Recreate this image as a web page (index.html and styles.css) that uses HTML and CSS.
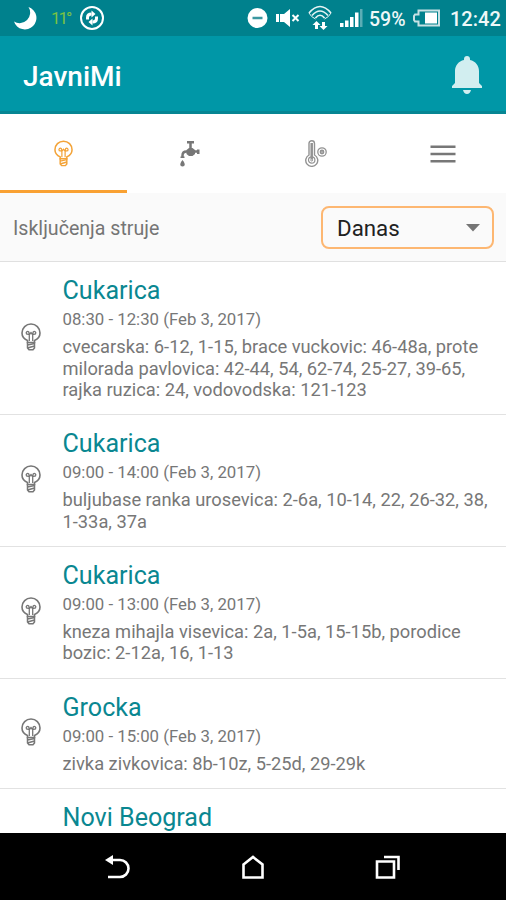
FILE: index.html
```html
<!DOCTYPE html>
<html lang="sr">
<head>
    <meta charset="UTF-8">
    <meta name="viewport" content="width=device-width, initial-scale=1.0">
    <title>JavniMi</title>
    <link rel="stylesheet" href="styles.css">
</head>
<body>
    <!-- shared bulb icon -->
    <svg class="defs" width="0" height="0">
        <symbol id="bulb" viewBox="0 0 20 28">
            <g fill="none" stroke="currentColor">
                <path d="M6.500 19.500v-2C3 16 1 13.500 1 10a9 9 0 0 1 18 0c0 3.500-2 6-5.500 7.500v2z" stroke-width="1.600"/>
                <path d="M8.300 18v-6.500L5.500 11c-1-2 1-3.500 2.300-2l.7 2.500 1.500-2 1.500 2 .7-2.500c1.300-1.500 3.300 0 2.300 2l-2.800.5V18" stroke-width="1.300"/>
                <path d="M6.500 19v6l1.500 1.800h4l1.500-1.800v-6M6.500 22l7-1.500M6.500 25l7-2" stroke-width="1.500"/>
            </g>
        </symbol>
    </svg>

    <div class="status-bar">
        <div class="status-left">
            <svg width="24" height="24" viewBox="0 0 24 24"><path d="M15.500 1A11.500 11.500 0 1 1 1 15.500 10.500 10.500 0 0 0 15.500 1z" fill="#fff"/></svg>
            <span class="temp">11°</span>
            <svg width="26" height="26" viewBox="0 0 26 26">
                <circle cx="13" cy="13" r="11" fill="none" stroke="#fff" stroke-width="2"/>
                <path d="M8.500 14.500v-2q0-3.500 4-3.500M17.500 11.500v2q0 3.500-4 3.500" fill="none" stroke="#fff" stroke-width="3"/>
                <path d="M12.500 5.500l4 3.500-4 3.500zM13.500 13.500L9.500 17l4 3.500z" fill="#fff"/>
            </svg>
        </div>
        <div class="status-right">
            <svg width="21" height="22" viewBox="0 0 21 22"><circle cx="10.500" cy="11" r="10" fill="#fff"/><path d="M5.500 11h10" stroke="#3b97a0" stroke-width="2.500"/></svg>
            <svg width="24" height="20" viewBox="0 0 24 20">
                <path d="M0 6h3v8H0zM4 6h4l6-5v18l-6-5H4z" fill="#fff"/>
                <path d="M16.500 7l6 6M22.500 7l-6 6" stroke="#fff" stroke-width="2"/>
            </svg>
            <svg width="24" height="26" viewBox="0 0 24 26">
                <g fill="none" stroke="#e6f3f4" stroke-width="1.700">
                    <path d="M1 8q11-13 22 0M4 10.500q8-9 16 0M7.500 13q4.500-5.500 9 0"/>
                    <path d="M1 8q2 4 6.500 6M23 8q-2 4-6.500 6" stroke-width="1"/>
                </g>
                <path d="M8.500 16l4 4h-2.500v4H7v-4H4.500zM15.500 25l-4-4H14v-4h3v4h2.500z" fill="#fff"/>
            </svg>
            <svg class="signal" width="23" height="18" viewBox="0 0 23 18">
                <path d="M0 14h3.500v4H0zM5 11.500h3.500V18H5zM10 8h3.500v10H10zM15 3.500h3.500V18H15z" fill="#fff"/>
                <path d="M20 0h2.500v18H20z" fill="#5badb5"/>
            </svg>
            <span class="percent">59%</span>
            <svg width="28" height="18" viewBox="0 0 28 18">
                <path d="M5.500 1.500h20.500v15H5.500v-4h-3.500l-1-1.500V7l1-1.500h3.500z" fill="none" stroke="#c7e1e4" stroke-width="2"/>
                <path d="M12 3.500h12v11H12z" fill="#fff"/>
            </svg>
            <span class="clock">12:42</span>
        </div>
    </div>

    <header>
        <h1>JavniMi</h1>
        <svg width="32" height="38" viewBox="0 0 32 38" fill="#d2eef0"><path d="M16 0c1.800 0 3 1.200 3 3v1c5.500 1.200 9 5.500 9 11v12l3 3v2H1v-2l3-3V15C4 9.500 7.500 5.200 13 4V3c0-1.800 1.200-3 3-3zM12 34h8q-1 4-4 4t-4-4z"/></svg>
    </header>

    <nav class="tabs">
        <a class="tab active"><svg width="19" height="27"><use href="#bulb"/></svg></a>
        <a class="tab">
            <svg width="20" height="26" viewBox="0 0 20 26">
                <path d="M7 1.200h7M10.500 1v9M2.500 16v-1.500q0-4 4-4H18" fill="none" stroke="#777" stroke-width="2.500"/>
                <path d="M6.500 9L9 7h3.500L15 9v4l-2.500 2H9l-2.500-2zM17 8.500h2.500V13H17zM.5 15.500h4V17h-4zM2.500 19q2.300 2.500 2.300 4.300a2.300 2.300 0 0 1-4.600 0q0-1.800 2.300-4.300z" fill="#777"/>
            </svg>
        </a>
        <a class="tab">
            <svg width="22" height="27" viewBox="0 0 22 27" fill="none" stroke="#929292">
                <path d="M4 15V3.500a2.500 2.500 0 0 1 5.500 0V15a6 6 0 1 1-5.500 0z" stroke-width="1.400"/>
                <path d="M6.700 3v16" stroke-width="2.500"/>
                <circle cx="6.700" cy="20" r="3.200" stroke-width="1.200"/>
                <circle cx="6.700" cy="20" r="1"/>
                <circle cx="17" cy="12" r="4.200" stroke-width="1.300"/>
                <circle cx="17" cy="12" r="1.500" stroke-width="1.800"/>
            </svg>
        </a>
        <a class="tab"><svg width="26" height="18" viewBox="0 0 26 18"><path d="M.5 1.800h25M.5 9h25M.5 16.200h25" stroke="#777" stroke-width="2.600"/></svg></a>
    </nav>

    <div class="filter">
        <span class="filter-label">Isključenja struje</span>
        <div class="select">
            <span>Danas</span>
            <svg width="14" height="8" viewBox="0 0 14 8"><path d="M0 0h14L7 7.500z" fill="#757575"/></svg>
        </div>
    </div>

    <main class="list">
        <div class="item">
            <svg class="icon" width="20" height="28"><use href="#bulb"/></svg>
            <div class="info">
                <h2>Cukarica</h2>
                <div class="time">08:30 - 12:30 (Feb 3, 2017)</div>
                <p>cvecarska: 6-12, 1-15, brace vuckovic: 46-48a, prote<br>milorada pavlovica: 42-44, 54, 62-74, 25-27, 39-65,<br>rajka ruzica: 24, vodovodska: 121-123</p>
            </div>
        </div>
        <div class="item">
            <svg class="icon" width="20" height="28"><use href="#bulb"/></svg>
            <div class="info">
                <h2>Cukarica</h2>
                <div class="time">09:00 - 14:00 (Feb 3, 2017)</div>
                <p>buljubase ranka urosevica: 2-6a, 10-14, 22, 26-32, 38,<br>1-33a, 37a</p>
            </div>
        </div>
        <div class="item">
            <svg class="icon" width="20" height="28"><use href="#bulb"/></svg>
            <div class="info">
                <h2>Cukarica</h2>
                <div class="time">09:00 - 13:00 (Feb 3, 2017)</div>
                <p>kneza mihajla visevica: 2a, 1-5a, 15-15b, porodice<br>bozic: 2-12a, 16, 1-13</p>
            </div>
        </div>
        <div class="item">
            <svg class="icon" width="20" height="28"><use href="#bulb"/></svg>
            <div class="info">
                <h2>Grocka</h2>
                <div class="time">09:00 - 15:00 (Feb 3, 2017)</div>
                <p>zivka zivkovica: 8b-10z, 5-25d, 29-29k</p>
            </div>
        </div>
        <div class="item">
            <div class="icon"></div>
            <div class="info">
                <h2>Novi Beograd</h2>
            </div>
        </div>
    </main>

    <footer>
        <svg width="26" height="24" viewBox="0 0 26 24"><path d="M6 5h9a8.500 8.500 0 0 1 0 17H3" fill="none" stroke="#fff" stroke-width="2.600"/><path d="M0 5l8-5v10z" fill="#fff"/></svg>
        <svg width="22" height="24" viewBox="0 0 22 24"><path d="M1.500 9.500L11 2l9.500 7.500v13h-19z" fill="none" stroke="#fff" stroke-width="2.600"/></svg>
        <svg width="26" height="24" viewBox="0 0 26 24"><path d="M2 6.500h17v16H2zM9 2h14.500v13" fill="none" stroke="#fff" stroke-width="2.600"/></svg>
    </footer>
</body>
</html>
```
FILE: styles.css
```css
* {
    box-sizing: border-box;
}
body {
    font-family: Roboto, sans-serif;
    margin: 0;
    height: 900px;
    display: flex;
    flex-direction: column;
    overflow: hidden;
    background-color: #fff;
}
svg {
    display: block;
    flex-shrink: 0;
}
.defs {
    position: absolute;
}
.status-bar {
    height: 36px;
    flex-shrink: 0;
    display: flex;
    justify-content: space-between;
    align-items: center;
    padding: 0 6px 0 13px;
    background-color: #00818d;
    color: #eef8f8;
}
.status-left,
.status-right {
    display: flex;
    align-items: center;
}
.temp {
    width: 15px;
    margin: 0 13px 0 14px;
    font-size: 17px;
    letter-spacing: -2px;
    color: #7ac143;
}
.status-right {
    gap: 8px;
}
.signal {
    margin-right: -3px;
}
.percent,
.clock {
    margin-top: 2px;
    font-size: 20px;
    font-weight: 500;
    white-space: nowrap;
}
.percent {
    width: 36px;
    margin-left: 1px;
    font-size: 19.5px;
}
.clock {
    width: 50px;
    margin-left: 1px;
}
header {
    height: 78px;
    flex-shrink: 0;
    display: flex;
    justify-content: space-between;
    align-items: center;
    padding: 0 23px;
    background-color: #0097a7;
    border-bottom: 3px solid #078693;
    color: #fff;
}
h1 {
    margin: 5px 0 0;
    font-size: 28px;
    font-weight: 500;
}
header svg {
    margin-top: 3px;
}
.tabs {
    height: 79px;
    flex-shrink: 0;
    display: grid;
    grid-template-columns: repeat(4, 1fr);
}
.tab {
    display: flex;
    justify-content: center;
    align-items: center;
    padding-top: 3px;
    border-bottom: 3px solid #fff;
    color: #777;
}
.active {
    border-bottom-color: #f9a132;
    color: #f3a338;
}
.filter {
    height: 69px;
    flex-shrink: 0;
    display: flex;
    justify-content: space-between;
    align-items: center;
    padding: 0 12px 0 13px;
    background-color: #fafafa;
    border-bottom: 1px solid #e0e0e0;
}
.filter-label {
    margin-top: 2px;
    font-size: 19.6px;
    color: #757575;
}
.select {
    width: 173px;
    height: 43px;
    display: flex;
    justify-content: space-between;
    align-items: center;
    padding: 1px 12px 0 14px;
    border: 2px solid #fdb772;
    border-radius: 8px;
    font-size: 22.3px;
    color: #212121;
}
.list {
    flex: 1;
    min-height: 0;
    overflow: hidden;
}
.item {
    display: flex;
    padding: 14px 0 13.7px 21px;
    border-bottom: 1px solid #e2e2e2;
    color: #777;
}
.icon {
    width: 20px;
    margin: 0 21.5px 3px 0;
    align-self: center;
}
.info {
    white-space: nowrap;
}
h2 {
    margin: 0;
    font-size: 25.1px;
    font-weight: 400;
    line-height: 30px;
    color: #0a8791;
}
.time {
    font-size: 16.8px;
    line-height: 26px;
}
p {
    margin: 4px 0 0;
    font-size: 18.3px;
    line-height: 21.5px;
}
footer {
    height: 67px;
    flex-shrink: 0;
    display: flex;
    justify-content: center;
    align-items: center;
    gap: 111px;
    background-color: #000;
}
```
